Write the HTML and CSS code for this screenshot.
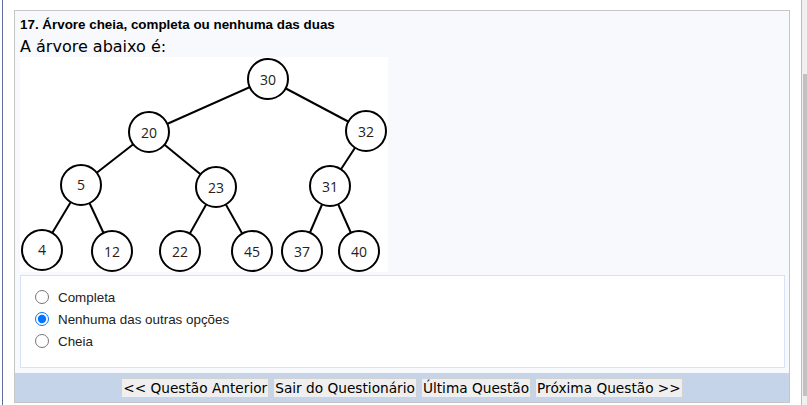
FILE: index.html
```html
<!DOCTYPE html>
<html lang="pt-BR">
<head>
  <meta charset="UTF-8">
  <title>Questionário</title>
  <link rel="stylesheet" href="styles.css">
</head>
<body>

  <div class="frame">
    <div class="page">

      <!-- questão -->
      <div class="question">
        <div class="question-body">
          <p class="question-title">17. Árvore cheia, completa ou nenhuma das duas</p>
          <p class="question-text">A árvore abaixo é:</p>

          <svg class="tree" viewBox="0 0 368 215" xmlns="http://www.w3.org/2000/svg">
            <g class="edges">
              <line x1="248" y1="22" x2="129" y2="75"/>
              <line x1="248" y1="22" x2="346" y2="74"/>
              <line x1="129" y1="75" x2="61" y2="128"/>
              <line x1="129" y1="75" x2="196" y2="130"/>
              <line x1="346" y1="74" x2="310" y2="129"/>
              <line x1="61" y1="128" x2="22" y2="193"/>
              <line x1="61" y1="128" x2="92" y2="194"/>
              <line x1="196" y1="130" x2="160" y2="194"/>
              <line x1="196" y1="130" x2="232" y2="194"/>
              <line x1="310" y1="129" x2="282" y2="194"/>
              <line x1="310" y1="129" x2="339" y2="194"/>
            </g>
            <g class="nodes">
              <circle cx="248" cy="22" r="20"/><text x="248" y="22">30</text>
              <circle cx="129" cy="75" r="20"/><text x="129" y="75">20</text>
              <circle cx="346" cy="74" r="20"/><text x="346" y="74">32</text>
              <circle cx="61" cy="128" r="20"/><text x="61" y="127">5</text>
              <circle cx="196" cy="130" r="20"/><text x="196" y="130">23</text>
              <circle cx="310" cy="129" r="20"/><text x="310" y="129">31</text>
              <circle cx="22" cy="193" r="20"/><text x="22" y="192">4</text>
              <circle cx="92" cy="194" r="20"/><text x="92" y="194">12</text>
              <circle cx="160" cy="194" r="20"/><text x="160" y="194">22</text>
              <circle cx="232" cy="194" r="20"/><text x="232" y="194">45</text>
              <circle cx="282" cy="194" r="20"/><text x="282" y="194">37</text>
              <circle cx="339" cy="194" r="20"/><text x="339" y="194">40</text>
            </g>
          </svg>

          <div class="answers">
            <label class="answer"><input type="radio" name="q17">Completa</label>
            <label class="answer"><input type="radio" name="q17" checked>Nenhuma das outras opções</label>
            <label class="answer"><input type="radio" name="q17">Cheia</label>
          </div>
        </div>

        <!-- navegação -->
        <div class="nav">
          <button>&lt;&lt; Questão Anterior</button>
          <button>Sair do Questionário</button>
          <button>Última Questão</button>
          <button>Próxima Questão &gt;&gt;</button>
        </div>
      </div>

    </div>
    <div class="scrollbar"><div class="scroll-thumb"></div></div>
  </div>

</body>
</html>
```

FILE: styles.css
```css
* {
  margin: 0;
  padding: 0;
  box-sizing: border-box;
}
html, body {
  height: 100%;
  background: #fff;
  font-family: "Liberation Sans", Arial, sans-serif;
  color: #000;
}

.frame {
  display: flex;
  height: 100%;
  overflow: hidden;
}

.page {
  flex: 1;
  margin-left: 2px;
  border-left: 1px solid #5f6f9c;
  padding: 10px 11px 0 11px;
}

.question {
  border: 1px solid #c6c6c6;
  background: #f7f9fc;
}

.question-body {
  padding: 6px 4px 5px 5px;
}

.question-title {
  font-weight: bold;
  font-size: 13.4px;
  line-height: 15px;
}

.question-text {
  font-family: "DejaVu Sans", Verdana, sans-serif;
  font-size: 16px;
  line-height: 19px;
  margin-top: 5px;
}

.tree {
  display: block;
  width: 368px;
  height: 215px;
  margin-top: 1px;
  background: #fff;
}
.tree .edges line {
  stroke: #000;
  stroke-width: 2;
}
.tree .nodes circle {
  fill: #fff;
  stroke: #000;
  stroke-width: 2;
}
.tree .nodes text {
  font-family: "Open Sans", sans-serif;
  font-size: 14px;
  fill: #222;
  text-anchor: middle;
  dominant-baseline: central;
}

.answers {
  margin-top: 3px;
  background: #fff;
  border: 1px solid #d6e3f6;
  padding: 10px 14px 15px 14px;
}

.answer {
  display: flex;
  align-items: center;
  height: 22px;
  font-size: 13.4px;
  color: #222;
}
.answer input {
  width: 14px;
  height: 14px;
  margin: 0 9px 0 0;
}

.nav {
  background: #c6d4ea;
  padding: 5px 0 4px;
  text-align: center;
  font-size: 0;
}
.nav button {
  font-family: "DejaVu Sans", Verdana, sans-serif;
  font-size: 13.7px;
  line-height: 16px;
  padding: 1px 1px;
  margin: 0 2px;
  background: #efefef;
  border: 1px solid #d2d2d2;
  color: #000;
}

.scrollbar {
  width: 6px;
  border-left: 1px solid #b9b6dc;
  background: #f0f0f0;
  padding-top: 74px;
}
.scroll-thumb {
  height: 322px;
  margin-left: 1px;
  background: #c1c1c1;
}
```
